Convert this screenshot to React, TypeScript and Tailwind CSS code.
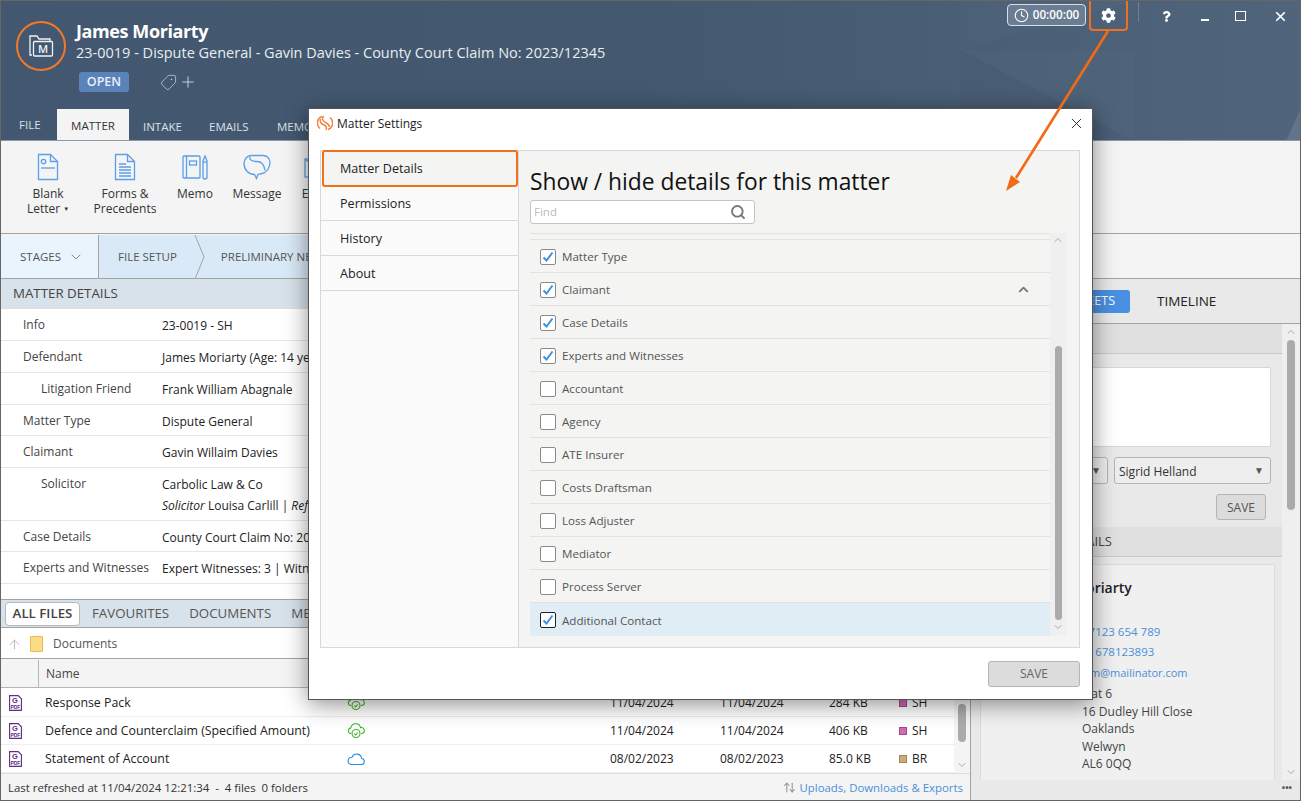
import { Clock, Search, ChevronDown, ChevronUp, ArrowUp, ArrowUpDown, X, Plus, Tag } from 'lucide-react';
import { FaCog, FaQuestion } from 'react-icons/fa';

const font = { fontFamily: '"Open Sans", "Noto Sans", sans-serif' };

const ribbonItems = [
  { label: ['Blank', 'Letter'], w: 'w-[68px]', icon: 'blank' },
  { label: ['Forms &', 'Precedents'], w: 'w-[86px]', icon: 'forms' },
  { label: ['Memo'], w: 'w-[54px]', icon: 'memo' },
  { label: ['Message'], w: 'w-[70px]', icon: 'message' },
  { label: ['Email'], w: 'w-[50px]', icon: 'email' },
];

const detailRows = [
  { label: 'Info', value: '23-0019 - SH', h: 'h-[32px]' },
  { label: 'Defendant', value: 'James Moriarty (Age: 14 years)', h: 'h-[32px]' },
  { label: 'Litigation Friend', value: 'Frank William Abagnale', h: 'h-[32px]', sub: true },
  { label: 'Matter Type', value: 'Dispute General', h: 'h-[31px]' },
  { label: 'Claimant', value: 'Gavin Willaim Davies', h: 'h-[32px]' },
  { label: 'Solicitor', value: 'Carbolic Law & Co', h: 'h-[53px]', sub: true, extra: true },
  { label: 'Case Details', value: 'County Court Claim No: 2023/12345', h: 'h-[31px]' },
  { label: 'Experts and Witnesses', value: 'Expert Witnesses: 3 | Witnesses: 2', h: 'h-[32px]' },
];

const fileRows = [
  { name: 'Response Pack', cloud: 'green', a: '11/04/2024', b: '11/04/2024', size: '284 KB', swatch: 'bg-[#cf6bb5] border-[#a04a8a]', who: 'SH' },
  { name: 'Defence and Counterclaim (Specified Amount)', cloud: 'green', a: '11/04/2024', b: '11/04/2024', size: '406 KB', swatch: 'bg-[#cf6bb5] border-[#a04a8a]', who: 'SH' },
  { name: 'Statement of Account', cloud: 'blue', a: '08/02/2023', b: '08/02/2023', size: '85.0 KB', swatch: 'bg-[#c9aa7c] border-[#a5865a]', who: 'BR' },
];

const settingsRows = [
  { label: 'Matter Type', on: true },
  { label: 'Claimant', on: true, caret: true },
  { label: 'Case Details', on: true },
  { label: 'Experts and Witnesses', on: true },
  { label: 'Accountant', on: false },
  { label: 'Agency', on: false },
  { label: 'ATE Insurer', on: false },
  { label: 'Costs Draftsman', on: false },
  { label: 'Loss Adjuster', on: false },
  { label: 'Mediator', on: false },
  { label: 'Process Server', on: false },
  { label: 'Additional Contact', on: true, selected: true },
];

function RibbonIcon({ kind }: { kind: string }) {
  const s = { fill: 'none', stroke: '#5b9fe8', strokeWidth: 1.3 };
  if (kind === 'blank' || kind === 'forms') {
    return (
      <svg width="22" height="28" viewBox="0 0 22 28">
        <path d="M1.5 1.5h12l7 7v18h-19z" {...s} />
        <path d="M13.5 1.5v7h7" {...s} />
        {kind === 'blank' ? (
          <>
            <circle cx="6.5" cy="8.5" r="2.2" {...s} />
            <path d="M4 15h14" {...s} />
          </>
        ) : (
          <path d="M5 11h7M5 14h12M5 17h12M5 20h12M5 23h12" {...s} strokeWidth={1.5} />
        )}
      </svg>
    );
  }
  if (kind === 'memo') {
    return (
      <svg width="27" height="26" viewBox="0 0 27 26">
        <rect x="1" y="2" width="17" height="22" rx="1" {...s} />
        <path d="M4.5 2v22" {...s} />
        <rect x="7.5" y="7" width="7" height="4" {...s} />
        <path d="M21 7l2-5 2 5v16a2 2 0 0 1-4 0z" {...s} />
        <path d="M21 8h4" {...s} />
      </svg>
    );
  }
  if (kind === 'message') {
    return (
      <svg width="28" height="27" viewBox="0 0 28 27">
        <path d="M8 1.500h12c4 0 7 3 7 7 0 5-3 10-8 11-2 .3-3 1-4 1l-1.500 4-2-4c-6 0-10.500-5-10.500-11 0-4 3-8 7-8z" {...s} />
        <path d="M7 2.500c-1 4 3 5 7 5s7 2 8 9" {...s} />
      </svg>
    );
  }
  return (
    <svg width="26" height="28" viewBox="0 0 26 28">
      <rect x="1" y="6" width="24" height="18" {...s} />
      <path d="M1 6l12 10 12-10" {...s} />
    </svg>
  );
}

function CloudIcon({ color }: { color: string }) {
  if (color === 'blue') {
    return (
      <svg width="18" height="14" viewBox="0 0 18 14" fill="none" stroke="#2e8fe0" strokeWidth="1.1">
        <path d="M4 12.500h10a3 3 0 0 0 .6-6A5 5 0 0 0 5 5.200 3.700 3.700 0 0 0 4 12.500z" />
      </svg>
    );
  }
  return (
    <svg width="18" height="16" viewBox="0 0 18 16" fill="none" stroke="#3cb521" strokeWidth="1.1">
      <path d="M4 10.500H3a3 3 0 0 1 .8-5.600A5 5 0 0 1 13.600 4.600 3 3 0 0 1 15 10.500h-1" />
      <circle cx="9" cy="10.500" r="4" fill="#fff" />
      <path d="M7.300 10.600l1.300 1.300 2.200-2.400" />
    </svg>
  );
}

function PdfIcon() {
  return (
    <svg width="13" height="16" viewBox="0 0 13 16">
      <path d="M.6.6h8.600l3.200 3.200v11.600H.6z" fill="#fff" stroke="#5f2c82" strokeWidth="1.1" />
      <text x="6" y="8" fontSize="7.500" fontWeight="700" textAnchor="middle" fill="#5f2c82" fontFamily="Liberation Sans, sans-serif">G</text>
      <text x="6.400" y="14" fontSize="5" fontWeight="700" textAnchor="middle" fill="#5f2c82" fontFamily="Liberation Sans, sans-serif">PDF</text>
    </svg>
  );
}

function CheckBox({ on, dark }: { on: boolean; dark?: boolean }) {
  return (
    <span className={`flex h-[16px] w-[16px] shrink-0 items-center justify-center rounded-[2px] border bg-white ${dark ? 'border-[#222]' : 'border-[#8a8a8a]'}`}>
      {on && (
        <svg width="12" height="12" viewBox="0 0 12 12" fill="none" stroke="#3f8fe6" strokeWidth="2">
          <path d="M1.500 6.500l3 3 6-8" />
        </svg>
      )}
    </span>
  );
}

function Header() {
  return (
    <div className="relative h-[140px] shrink-0 overflow-hidden border-b border-[#8b97a5] bg-gradient-to-r from-[#435870] via-[#44596f] to-[#50657c]">
      <svg className="absolute inset-0" width="1301" height="140" viewBox="0 0 1301 140">
        <polygon points="960,0 1130,0 960,49" fill="#fff" opacity="0.015" />
        <polygon points="960,49 1133,140 960,140" fill="#000" opacity="0.025" />
        <polygon points="960,49 1133,49 1133,140" fill="#fff" opacity="0.015" />
        <polygon points="1301,105 1301,140 1285,140" fill="#fff" opacity="0.1" />
      </svg>

      <div className="relative flex pl-[15px] pt-[20px]">
        <div className="flex h-[50px] w-[50px] items-center justify-center rounded-full border-2 border-[#f07a2a]">
          <svg width="26" height="26" viewBox="0 0 26 26" fill="none" stroke="#eef2f6" strokeWidth="1.3">
            <path d="M4 22H2V3h7l2 3h11v3" />
            <rect x="5.500" y="8.500" width="19" height="14.500" rx="1" />
            <text x="15" y="20" fontSize="11" fontWeight="600" textAnchor="middle" fill="#eef2f6" stroke="none">M</text>
          </svg>
        </div>
        <div className="ml-[10px] text-white">
          <div className="text-[18px] leading-[20px] font-bold tracking-[-0.4px]">James Moriarty</div>
          <div className="mt-[2px] text-[14.5px] leading-[20px] text-[#e8edf2]">
            23-0019 - Dispute General - Gavin Davies - County Court Claim No: 2023/12345
          </div>
          <div className="mt-[9px] ml-[3px] flex items-center">
            <span className="flex h-[20px] w-[50px] items-center justify-center rounded-[3px] bg-[#5a83b9] text-[12.5px] font-semibold text-[#e9f0f8]">OPEN</span>
            <Tag size={17} strokeWidth={1} className="ml-[31px] scale-x-[-1] text-[#d5dce4]" />
            <Plus size={18} strokeWidth={1.2} className="ml-[2px] text-[#d5dce4]" />
          </div>
        </div>
      </div>

      <div className="absolute bottom-0 left-0 flex items-end text-[11.5px] text-[#d9e0e8]">
        <span className="mb-[7px] ml-[18px] w-[38px]">FILE</span>
        <span className="flex h-[31px] w-[72px] items-center justify-center bg-[#f4f4f4] pt-[2px] text-[#333]">MATTER</span>
        <span className="mb-[5px] ml-[14px] w-[66px]">INTAKE</span>
        <span className="mb-[5px] w-[68px]">EMAILS</span>
        <span className="mb-[5px]">MEMOS</span>
      </div>

      <div className="absolute top-0 right-0 flex items-start text-white">
        <div className="mt-[3px] flex h-[22px] w-[79px] items-center justify-center gap-[4px] rounded-[4px] border border-[#d8dee5] bg-[#6b7d92] text-[11.7px] font-semibold">
          <Clock size={15} strokeWidth={1.8} />
          00:00:00
        </div>
        <div className="ml-[3px] flex h-[30px] w-[39px] items-center justify-center rounded-b-[4px] border-2 border-t-0 border-[#f0701e]">
          <FaCog size={15} />
        </div>
        <div className="ml-[10px] mt-[1px] h-[20px] w-px bg-[#6d7f93]" />
        <div className="flex h-[30px] w-[161px] items-center justify-between pr-[12px] pl-[22px]">
          <FaQuestion size={11} />
          <span className="mt-[7px] ml-[2px] h-[2px] w-[8px] bg-white" />
          <span className="h-[10px] w-[11px] border-[1.5px] border-white" />
          <X size={15} strokeWidth={2.8} />
        </div>
      </div>
    </div>
  );
}

function Ribbon() {
  return (
    <div className="flex h-[93px] shrink-0 items-start border-b border-[#a3a3a3] bg-[#f4f4f4] pl-[13px] pt-[12px] text-[12px] leading-[15px] text-[#333]">
      {ribbonItems.map((item) => (
        <div key={item.icon} className={`flex flex-col items-center ${item.w}`}>
          <div className="flex h-[28px] items-center">
            <RibbonIcon kind={item.icon} />
          </div>
          <div className="mt-[5px] text-center">
            {item.label.map((l) => (
              <div key={l}>
                {l}
                {l === 'Letter' && <span className="ml-[3px] align-middle text-[6px]">▼</span>}
              </div>
            ))}
          </div>
        </div>
      ))}
    </div>
  );
}

function Stages() {
  return (
    <div className="flex h-[45px] shrink-0 items-center border-b border-[#a3a3a3] bg-[#f4f4f4] pt-[1px] text-[11.5px] text-[#555]">
      <div className="flex h-full w-[98px] items-center border-r border-[#a3a3a3] bg-[#e9f4fd] pl-[19px]">
        STAGES
        <ChevronDown size={16} strokeWidth={1} className="ml-[7px]" />
      </div>
      <div className="relative flex h-full w-[213px] items-center bg-[#d9e9f7] pl-[19px] whitespace-nowrap">
        FILE SETUP
        <svg className="absolute top-0 left-[95px]" width="12" height="44" viewBox="0 0 12 44" fill="none" stroke="#a3a3a3">
          <path d="M1 0l9 22-9 22" />
        </svg>
        <span className="ml-[44px]">PRELIMINARY NE</span>
      </div>
    </div>
  );
}

function MatterDetails() {
  return (
    <div className="flex h-[320px] flex-col overflow-hidden bg-white">
      <div className="flex h-[30px] items-center bg-[#d8e2ea] pl-[12px] text-[13.3px] text-[#444]">MATTER DETAILS</div>
      {detailRows.map((row) => (
        <div key={row.label} className={`flex border-b border-[#e6e6e6] pl-[22px] text-[12px] ${row.h}`}>
          <div className={`w-[139px] shrink-0 pt-[7px] whitespace-nowrap text-[#444] ${row.sub ? 'pl-[18px]' : ''}`}>{row.label}</div>
          <div className="pt-[8px] whitespace-nowrap text-[#222]">
            {row.value}
            {row.extra && (
              <div className="mt-[3px]">
                <i>Solicitor</i> Louisa Carlill | <i>Ref</i>
              </div>
            )}
          </div>
        </div>
      ))}
    </div>
  );
}

function FilesPanel() {
  return (
    <div className="flex min-h-0 flex-1 flex-col border-t border-[#a3a3a3]">
      <div className="flex h-[28px] shrink-0 items-center border-b border-[#a3a3a3] bg-[#d8e2ea] pl-[4px] text-[13.3px] text-[#555]">
        <span className="flex h-[24px] w-[75px] items-center justify-center rounded-[4px] border border-[#b8b8b8] bg-white font-semibold text-[#444]">ALL FILES</span>
        <span className="ml-[12px]">FAVOURITES</span>
        <span className="ml-[20px]">DOCUMENTS</span>
        <span className="ml-[20px]">MEMOS</span>
      </div>
      <div className="flex h-[31px] shrink-0 items-center border-b border-[#a3a3a3] bg-white pt-[2px] text-[12px] text-[#555]">
        <ArrowUp size={15} strokeWidth={1.3} className="ml-[6px] text-[#aaa]" />
        <span className="relative ml-[8px] h-[16px] w-[13px] rounded-[1px] border border-[#e2bd4f] bg-[#fbdc84]" />
        <span className="ml-[10px]">Documents</span>
      </div>
      <div className="flex h-[29px] shrink-0 items-center border-b border-[#b5b5b5] bg-[#f4f4f4] pt-[1px] text-[12px] text-[#444]">
        <span className="h-full w-[38px] border-r border-[#b5b5b5]" />
        <span className="ml-[7px]">Name</span>
      </div>
      <div className="relative flex-1 bg-white pt-[1px]">
        {fileRows.map((f) => (
          <div key={f.name} className="flex h-[28px] items-center border-b border-[#eeeeee] text-[12.35px] text-[#222]">
            <span className="flex w-[44px] shrink-0 pl-[8px]">
              <PdfIcon />
            </span>
            <span className="w-[302px] shrink-0 pt-[1px] whitespace-nowrap">{f.name}</span>
            <span className="flex w-[263px] shrink-0">
              <CloudIcon color={f.cloud} />
            </span>
            <span className="w-[110px] shrink-0 text-[12px]">{f.a}</span>
            <span className="w-[109px] shrink-0 text-[12px]">{f.b}</span>
            <span className="w-[70px] shrink-0 text-[12px]">{f.size}</span>
            <span className={`mr-[5px] h-[8px] w-[8px] shrink-0 border ${f.swatch}`} />
            <span className="text-[12px]">{f.who}</span>
          </div>
        ))}
        <div className="absolute top-0 right-0 bottom-0 flex w-[16px] flex-col items-center bg-[#f4f4f4]">
          <div className="mt-[16px] h-[38px] w-[8px] rounded-[4px] bg-[#ababab]" />
          <ChevronDown size={12} className="absolute bottom-[2px] text-[#aaa]" />
        </div>
      </div>
      <div className="flex h-[28px] shrink-0 items-center justify-between border-t border-[#dddddd] bg-[#f4f4f4] pr-[7px] pl-[7px] text-[11.4px] text-[#333]">
        <span>Last refreshed at 11/04/2024 12:21:34&nbsp; -&nbsp; 4 files&nbsp; 0 folders</span>
        <span className="flex items-center gap-[4px] text-[#4a8fd9]">
          <ArrowUpDown size={13} className="text-[#999]" />
          Uploads, Downloads &amp; Exports
        </span>
      </div>
    </div>
  );
}

function RightPanel() {
  return (
    <div className="flex min-w-0 flex-1 flex-col border-l border-[#a3a3a3] bg-[#e9e9e9]">
      <div className="flex h-[45px] shrink-0 items-center border-b border-[#a3a3a3] text-[13.5px] text-[#222]">
        <span className="ml-[50px] flex h-[23px] w-[109px] items-center justify-end rounded-[3px] bg-[#4a90e2] pr-[15px] text-[12.5px] text-white">TIMESHEETS</span>
        <span className="ml-[27px] pt-[1px]">TIMELINE</span>
      </div>
      <div className="flex min-h-0 flex-1">
        <div className="flex min-w-0 flex-1 flex-col overflow-hidden">
          <div className="h-[30px] shrink-0 border-b border-[#c8c8c8] bg-[#e0e0e0]" />
          <div className="pr-[11px] pl-[12px] pt-[13px]">
            <div className="ml-auto h-[80px] w-[200px] rounded-[2px] border border-[#d6d6d6] bg-white" />
            <div className="mt-[10px] flex justify-end gap-[6px] text-[12px] text-[#333]">
              <div className="flex h-[27px] w-[40px] items-center justify-end rounded-[3px] border border-[#b5b5b5] bg-[#eeeeee] pr-[6px] text-[10px] text-[#555]">▼</div>
              <div className="flex h-[27px] w-[157px] items-center justify-between rounded-[3px] border border-[#b5b5b5] bg-[#eeeeee] pr-[6px] pl-[4px]">
                <span className="pt-[2px]">Sigrid Helland</span>
                <span className="text-[10px] text-[#555]">▼</span>
              </div>
            </div>
            <div className="mt-[10px] flex justify-end pr-[5px]">
              <div className="flex h-[26px] w-[50px] items-center justify-center rounded-[3px] border border-[#b5b5b5] bg-[#dcdcdc] pt-[1px] text-[12px] text-[#555]">SAVE</div>
            </div>
          </div>
          <div className="mt-[7px] flex h-[30px] shrink-0 items-center justify-end border-b border-[#c8c8c8] bg-[#e0e0e0] pr-[170px] text-[13px] text-[#444]">DETAILS</div>
          <div className="mt-[7px] mr-[7px] ml-[9px] min-h-0 flex-1 overflow-hidden border border-b-0 border-[#dcdcdc] bg-[#f0f0f0] pl-[101px] text-[12px] leading-[17.5px] text-[#444]">
            <div className="mt-[14px] ml-[-53px] text-[14px] font-semibold whitespace-nowrap text-[#222]">James Moriarty</div>
            <div className="mt-[26px] whitespace-nowrap text-[11.5px] text-[#4a8fd9]">07123 654 789</div>
            <div className="mt-[3px] whitespace-nowrap text-[11.5px] text-[#4a8fd9]">01678123893</div>
            <div className="mt-[3px] whitespace-nowrap text-[11px] text-[#4a8fd9]">sjm@mailinator.com</div>
            <div className="mt-[4px]">Flat 6</div>
            <div>16 Dudley Hill Close</div>
            <div>Oaklands</div>
            <div>Welwyn</div>
            <div>AL6 0QQ</div>
            <div className="mt-[9px] ml-[-52px]">Referral</div>
          </div>
        </div>
        <div className="relative flex w-[18px] shrink-0 flex-col items-center bg-[#efefef]">
          <ChevronUp size={12} className="mt-[2px] text-[#aaa]" />
          <div className="mt-[2px] h-[170px] w-[8px] rounded-[4px] bg-[#ababab]" />
          <ChevronDown size={12} className="absolute bottom-[2px] text-[#aaa]" />
        </div>
      </div>
      <div className="flex h-[20px] shrink-0 items-center justify-end pr-[8px] pb-[4px] text-[9px] font-bold text-[#555]">•••</div>
    </div>
  );
}

function SettingsModal() {
  return (
    <div className="absolute top-[107px] left-[307px] flex h-[592px] w-[785px] flex-col border border-[#555] bg-white shadow-[0_4px_22px_rgba(0,0,0,0.45)]">
      <div className="flex h-[41px] shrink-0 items-start pt-[6px] pl-[8px] text-[12px] text-[#222]">
        <svg width="16" height="16" viewBox="0 0 16 16" fill="none" stroke="#f0823a" strokeWidth="1.5">
          <path d="M5 1.500a7 7 0 0 0-2 12" />
          <path d="M11 14.500a7 7 0 0 0 2-12" />
          <path d="M7 1c-2 1.500-2 4 0 5.500s5 2 5.500 5.500" />
          <path d="M3.500 4c-1 3 1 5 3.500 6s3 3 2 5" />
        </svg>
        <span className="ml-[4px]">Matter Settings</span>
        <X size={17} strokeWidth={1.2} className="ml-auto mr-[7px] text-[#111]" />
      </div>

      <div className="mr-[12px] ml-[11px] flex min-h-0 flex-1 border border-[#d8d8d8] bg-[#f4f4f3]">
        <div className="relative w-[198px] shrink-0 border-r border-[#d8d8d8] bg-[#fafafa] text-[12.6px] text-[#222]">
          <div className="absolute top-[-1px] left-[1px] flex h-[37px] w-[196px] items-center rounded-[3px] border-2 border-[#f0701e] bg-[#f4f4f3] pt-[1px] pl-[16px]">Matter Details</div>
          <div className="h-[35px]" />
          {['Permissions', 'History', 'About'].map((t) => (
            <div key={t} className="flex h-[35px] items-center border-b border-[#d8d8d8] pt-[3px] pl-[19px]">{t}</div>
          ))}
        </div>
        <div className="flex min-w-0 flex-1 flex-col pl-[11px]">
          <div className="mt-[15px] text-[22.8px] leading-[32px] text-[#111]">Show / hide details for this matter</div>
          <div className="mt-[2px] flex h-[24px] w-[225px] shrink-0 items-center justify-between rounded-[3px] border border-[#c4c4c4] bg-white pr-[8px] pl-[3px] text-[11.5px] text-[#bbb]">
            Find
            <Search size={16} strokeWidth={2.8} className="text-[#777]" />
          </div>
          <div className="mt-[9px] flex min-h-0 flex-1 pb-[12px]">
            <div className="w-[520px] shrink-0 border-t border-[#e2e2e2]">
              <div className="h-[6px] border-b border-[#e2e2e2]" />
              {settingsRows.map((r) => (
                <div
                  key={r.label}
                  className={`flex h-[33px] items-center pt-[1px] pl-[10px] text-[11.6px] text-[#555] ${r.selected ? 'bg-[#e0edf5]' : 'border-b border-[#e2e2e2]'}`}
                >
                  <CheckBox on={r.on} dark={r.selected} />
                  <span className="ml-[6px] pt-[1px]">{r.label}</span>
                  {r.caret && <ChevronUp size={15} strokeWidth={3} className="ml-auto mr-[19px] text-[#777]" />}
                </div>
              ))}
            </div>
            <div className="relative flex w-[16px] shrink-0 flex-col items-center bg-[#efefef]">
              <ChevronUp size={12} className="mt-[1px] text-[#aaa]" />
              <div className="mt-[100px] h-[274px] w-[7px] rounded-[4px] bg-[#ababab]" />
              <ChevronDown size={12} className="absolute bottom-[2px] text-[#aaa]" />
            </div>
          </div>
        </div>
      </div>

      <div className="flex h-[51px] shrink-0 items-center justify-end pr-[12px]">
        <div className="flex h-[26px] w-[92px] items-center justify-center rounded-[3px] border border-[#b5b5b5] bg-[#dcdcdc] text-[12px] text-[#666]">SAVE</div>
      </div>
    </div>
  );
}

export default function App() {
  return (
    <div style={font} className="relative flex h-[801px] w-[1301px] flex-col overflow-hidden border border-[#666] bg-[#f4f4f4]">
      <Header />
      <Ribbon />
      <Stages />
      <div className="flex min-h-0 flex-1">
        <div className="flex w-[969px] shrink-0 flex-col bg-white">
          <MatterDetails />
          <FilesPanel />
        </div>
        <RightPanel />
      </div>

      <SettingsModal />

      {/* annotation arrow from the gear to the dialog */}
      <svg className="absolute top-0 left-0" width="1301" height="200" viewBox="0 0 1301 200">
        <path d="M1107 30L1015 177" stroke="#f26a15" strokeWidth="2.6" />
        <polygon points="1005,190 1010,174 1019,181" fill="#f26a15" />
      </svg>
    </div>
  );
}
